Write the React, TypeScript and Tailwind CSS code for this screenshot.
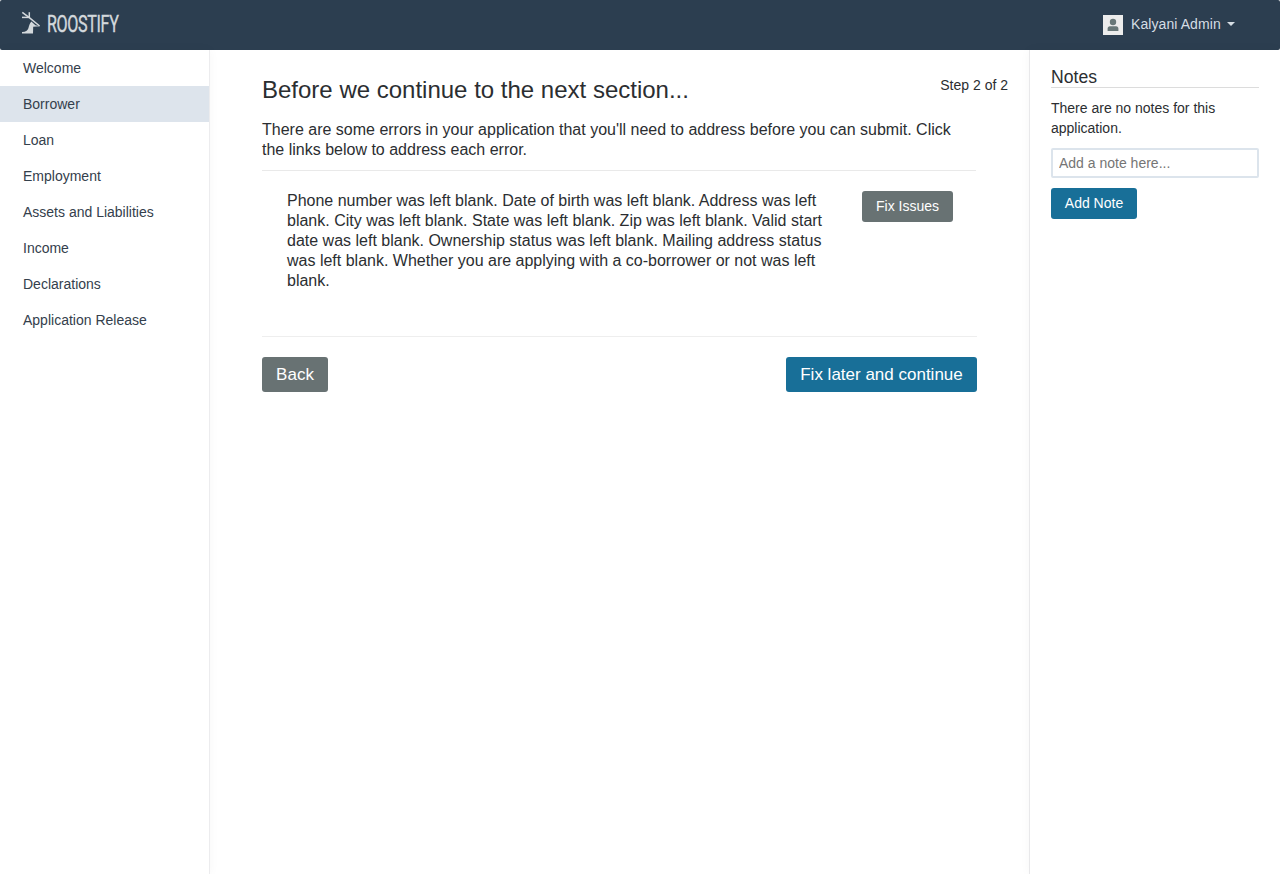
const navItems = [
  'Welcome',
  'Borrower',
  'Loan',
  'Employment',
  'Assets and Liabilities',
  'Income',
  'Declarations',
  'Application Release',
];

function Logo() {
  return (
    <svg width="160" height="40" viewBox="0 0 160 40" fill="none" role="img" aria-label="Roostify">
      <g stroke="#d3d8dc" strokeWidth="1.5">
        <path d="M2.3 4.3 L9 9.4 L19.6 18" />
        <path d="M9.3 4.2 V9.8" />
        <path d="M2 9.4 H9.6" />
      </g>
      <path
        d="M11.4 13.6 L15.4 17.2 L20 18.2 L13.2 18.8 L13 25.4 H2 V23.9 C5.5 24 7.6 22.5 8.4 20.2 C9 18.2 9.6 15.6 11.4 13.6 Z"
        fill="#d3d8dc"
      />
      <text
        x="27"
        y="24"
        textLength="71.5"
        lengthAdjust="spacingAndGlyphs"
        fill="#d3d8dc"
        stroke="#d3d8dc"
        strokeWidth="0.4"
        className="font-['Roboto',sans-serif] text-[23px] tracking-[-0.5px]"
      >
        ROOSTIFY
      </text>
    </svg>
  );
}

function Header() {
  return (
    <header className="flex h-[50px] items-start justify-between rounded-[2px] bg-[#2c3e50] pr-[45px] pl-5">
      <div className="pt-2">
        <Logo />
      </div>
      <button className="flex items-start pt-[15px] text-[#d5dde4]">
        <svg width="20" height="20" viewBox="0 0 20 20" className="mr-2">
          <rect width="20" height="20" fill="#ececec" />
          <circle cx="10" cy="7" r="3.2" fill="#687778" />
          <path d="M4.6 16 V13.8 Q4.6 11.2 7 11.2 H13 Q15.4 11.2 15.4 13.8 V16 Z" fill="#687778" />
        </svg>
        <span className="-mt-px w-[90px] text-left text-sm leading-5 tracking-[0.08px] whitespace-nowrap">Kalyani Admin</span>
        <svg width="8" height="4" viewBox="0 0 8 4" className="mt-[7px] ml-1.5">
          <path d="M0 0 H8 L4 4 Z" fill="#d5dde4" />
        </svg>
      </button>
    </header>
  );
}

function Sidebar() {
  return (
    <nav className="w-[210px] shrink-0 border-r border-[#ececee] shadow-[0_0_10px_rgba(0,0,0,0.04)]">
      {navItems.map((item) => (
        <a
          key={item}
          className={
            item === 'Borrower'
              ? 'block h-9 bg-[#dde4ec] pl-[23px] text-sm leading-9 text-[#34404c]'
              : 'block h-9 pl-[23px] text-sm leading-9 text-[#34404c]'
          }
        >
          {item}
        </a>
      ))}
    </nav>
  );
}

function Notes() {
  return (
    <aside className="w-[251px] shrink-0 border-l border-[#e8e8ea] pt-[17px] pr-[21px] pl-[21px] shadow-[0_0_10px_rgba(0,0,0,0.04)]">
      <h2 className="h-[21px] border-b border-[#dcdcdc] text-[17.6px] leading-5">Notes</h2>
      <p className="mt-2.5 text-sm leading-5">There are no notes for this application.</p>
      <input
        placeholder="Add a note here..."
        className="mt-2.5 block h-[30px] w-full rounded-[2px] border-2 border-[#dce4ec] px-1.5 text-sm placeholder:text-[#757575]"
      />
      <button className="mt-2.5 h-[31px] w-[86px] rounded-[3px] bg-[#186f98] pb-0.5 text-sm text-white">
        Add Note
      </button>
    </aside>
  );
}

function Content() {
  return (
    <main className="relative min-w-0 flex-1 pt-[26px] pr-[52px] pl-[52px]">
      <div className="absolute top-[25px] right-[21px] text-sm leading-5">Step 2 of 2</div>
      <h1 className="text-2xl leading-7">Before we continue to the next section...</h1>
      <p className="mt-4 text-base leading-5">
        There are some errors in your application that you'll need to address before you can submit. Click
        the links below to address each error.
      </p>
      <hr className="mt-2.5 mr-px border-[#e9e9e9]" />
      <div className="flex items-start justify-between pt-5 pr-6 pl-[25px]">
        <p className="w-[540px] text-base leading-5">
          Phone number was left blank. Date of birth was left blank. Address was left blank. City was left
          blank. State was left blank. Zip was left blank. Valid start date was left blank. Ownership status
          was left blank. Mailing address status was left blank. Whether you are applying with a co-borrower
          or not was left blank.
        </p>
        <button className="h-[31px] w-[91px] rounded-[3px] bg-[#687273] pb-0.5 text-sm text-white">
          Fix Issues
        </button>
      </div>
      <hr className="mt-[45px] border-[#eeeeee]" />
      <div className="mt-5 flex justify-between text-[17px] text-white">
        <button className="h-[35px] w-[66px] rounded-[3px] bg-[#687273]">Back</button>
        <button className="h-[35px] w-[191px] rounded-[3px] bg-[#186f98]">Fix later and continue</button>
      </div>
    </main>
  );
}

export default function App() {
  return (
    <div className="flex h-[874px] w-[1280px] flex-col overflow-hidden bg-white font-['Liberation_Sans',Arial,sans-serif] text-[#2b2e31]">
      <Header />
      <div className="flex min-h-0 flex-1">
        <Sidebar />
        <Content />
        <Notes />
      </div>
    </div>
  );
}
